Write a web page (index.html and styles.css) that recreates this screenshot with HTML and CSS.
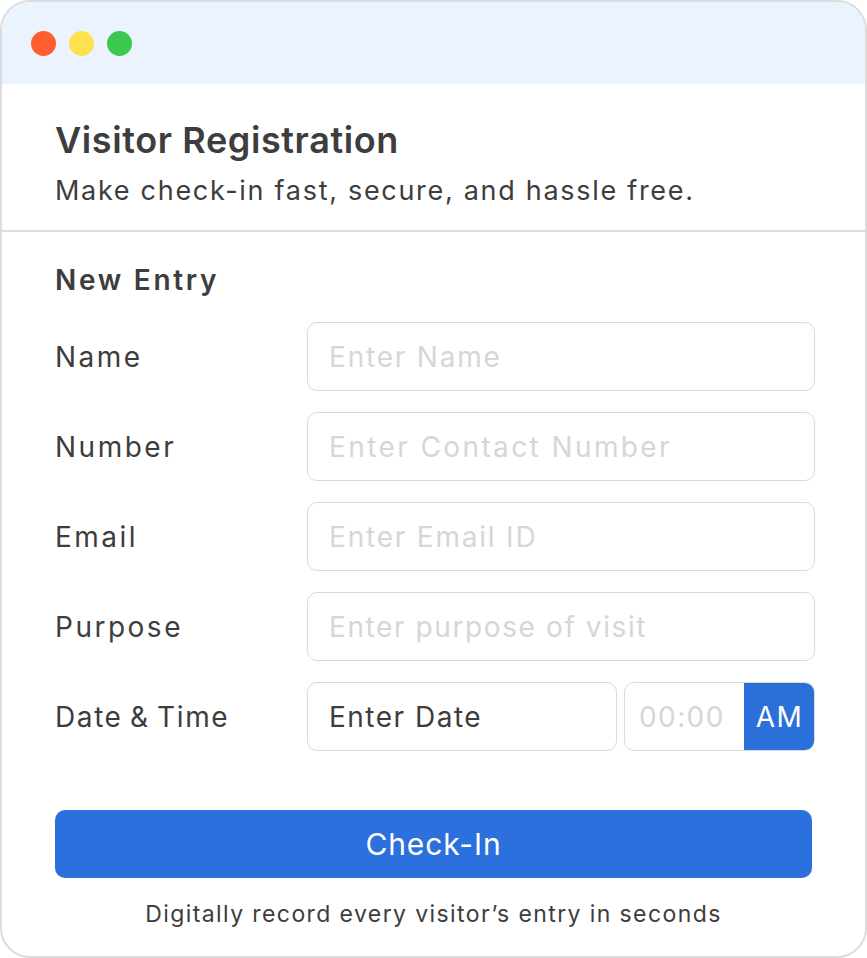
FILE: index.html
```html
<!DOCTYPE html>
<html lang="en">
<head>
<meta charset="utf-8">
<title>Visitor Registration</title>
<link rel="stylesheet" href="styles.css">
</head>
<body>
<div class="window">
  <div class="titlebar">
    <span class="dot dot-red"></span>
    <span class="dot dot-yellow"></span>
    <span class="dot dot-green"></span>
  </div>
  <header class="header">
    <h1 class="title">Visitor Registration</h1>
    <p class="subtitle">Make check-in fast, secure, and hassle free.</p>
  </header>
  <main class="form">
    <h2 class="section-title">New Entry</h2>
    <div class="rows">
      <label class="label">Name</label>
      <div class="field placeholder">Enter Name</div>
      <label class="label">Number</label>
      <div class="field placeholder wide">Enter Contact Number</div>
      <label class="label">Email</label>
      <div class="field placeholder">Enter Email ID</div>
      <label class="label">Purpose</label>
      <div class="field placeholder narrow">Enter purpose of visit</div>
      <label class="label label-multi">Date &amp; Time</label>
      <div class="datetime">
        <div class="field date">Enter Date</div>
        <div class="time">
          <span class="time-value">00:00</span>
          <span class="ampm">AM</span>
        </div>
      </div>
    </div>
    <button class="checkin">Check-In</button>
    <p class="footnote">Digitally record every visitor’s entry in seconds</p>
  </main>
</div>
</body>
</html>
```
FILE: styles.css
```css
* { box-sizing: border-box; }
html, body { margin: 0; padding: 0; background: #fff; }
body {
  font-family: Inter, "Open Sans", "Liberation Sans", sans-serif;
  color: #3d3d3d;
}
.window {
  width: 867px;
  height: 958px;
  border: 2px solid #dcdcdc;
  border-radius: 30px;
  overflow: hidden;
  background: #fff;
}
.titlebar {
  height: 82px;
  background: #ebf3fe;
  display: flex;
  align-items: center;
  gap: 13px;
  padding-left: 29px;
}
.dot {
  width: 25px;
  height: 25px;
  border-radius: 50%;
  display: block;
}
.dot-red { background: #fe5f2d; }
.dot-yellow { background: #ffe14f; }
.dot-green { background: #3cc74f; }

.header {
  padding: 34px 50px 21px 53px;
  border-bottom: 2px solid #dcdcdc;
}
.title {
  margin: 0;
  font-size: 36px;
  line-height: 44px;
  font-weight: 600;
  letter-spacing: 0.6px;
  color: #3d3d3d;
}
.subtitle {
  margin: 11px 0 0;
  font-size: 27px;
  line-height: 36px;
  font-weight: 400;
  letter-spacing: 1.7px;
  color: #3d3d3d;
}
.form {
  padding: 31px 50px 0 53px;
}
.section-title {
  margin: 0;
  font-size: 28px;
  line-height: 34px;
  font-weight: 600;
  letter-spacing: 2.7px;
  color: #3d3d3d;
}
.rows {
  margin-top: 25px;
  display: grid;
  grid-template-columns: 252px 1fr;
  grid-auto-rows: 69px;
  row-gap: 21px;
  align-items: center;
}
.label {
  font-size: 28px;
  line-height: 34px;
  letter-spacing: 2.5px;
  color: #3d3d3d;
}
.label-multi {
  letter-spacing: 1.6px;
  word-spacing: -2px;
}
.field {
  height: 69px;
  border: 1px solid #dadada;
  border-radius: 10px;
  padding: 0 21px;
  display: flex;
  align-items: center;
  font-size: 28px;
  letter-spacing: 1.8px;
  color: #3d3d3d;
}
.placeholder { color: #d6d6d6; }
.field.wide { letter-spacing: 2.4px; }
.field.narrow { letter-spacing: 1.6px; }
.datetime {
  display: flex;
  gap: 7px;
  height: 69px;
}
.date { width: 310px; flex: none; letter-spacing: 1.5px; }
.time {
  flex: 1;
  display: flex;
  border: 1px solid #dadada;
  border-radius: 10px;
  overflow: hidden;
  align-items: stretch;
}
.time-value {
  flex: 1;
  display: flex;
  align-items: center;
  padding-left: 14px;
  font-size: 28px;
  letter-spacing: 1.4px;
  color: #d6d6d6;
}
.ampm {
  width: 70px;
  background: #2b6fd9;
  color: #fff;
  font-size: 28px;
  letter-spacing: 1.5px;
  padding-left: 1px;
  display: flex;
  align-items: center;
  justify-content: center;
}
.checkin {
  display: block;
  margin-top: 59px;
  width: 757px;
  height: 68px;
  border: none;
  border-radius: 10px;
  background: #2b70dc;
  color: #fff;
  font-family: inherit;
  font-size: 30px;
  font-weight: 400;
  letter-spacing: 0.9px;
}
.footnote {
  margin: 22px 0 0;
  width: 757px;
  text-align: center;
  font-size: 23px;
  line-height: 28px;
  letter-spacing: 1.4px;
  color: #3d3d3d;
}
```
